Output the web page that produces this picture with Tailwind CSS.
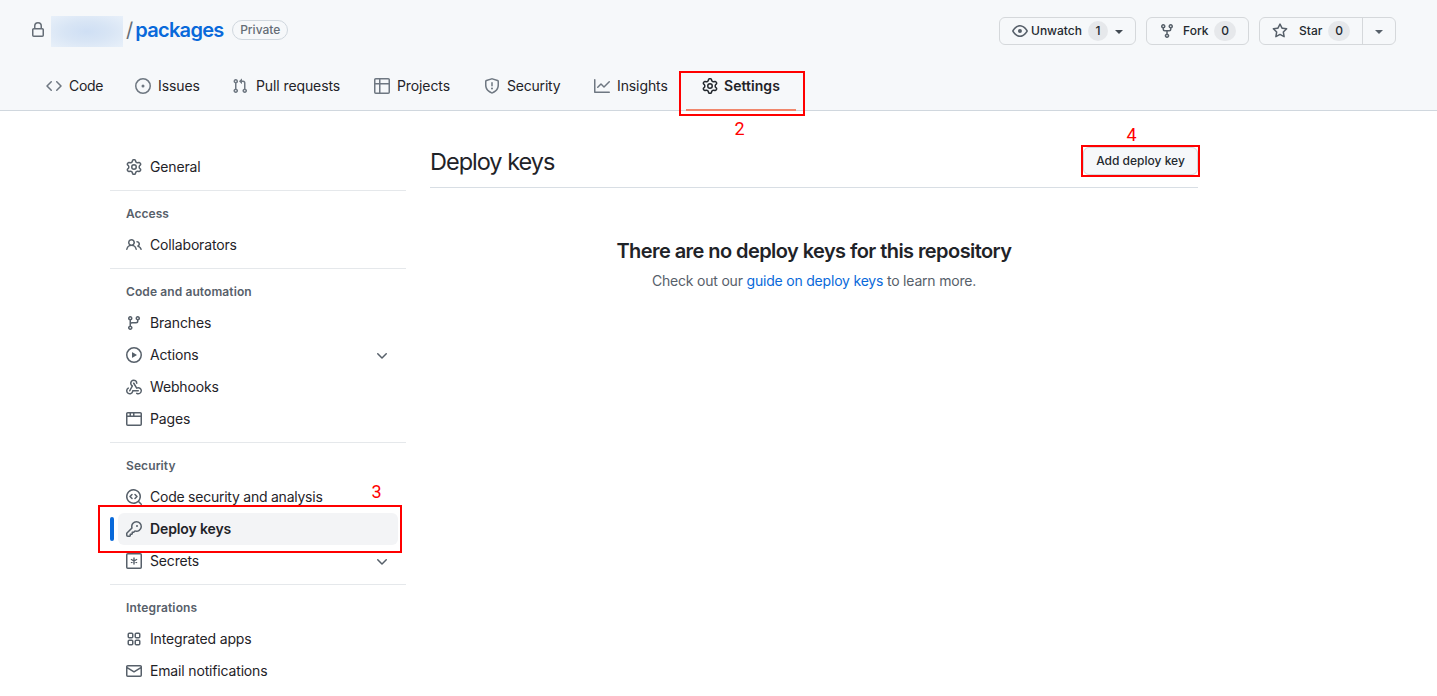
<!DOCTYPE html>
<html lang="en">
<head>
<meta charset="utf-8">
<title>Deploy keys</title>
<script src="https://cdn.jsdelivr.net/npm/@tailwindcss/browser@4"></script>
</head>
<body class="relative h-[696px] w-[1437px] overflow-hidden bg-white font-['Inter',sans-serif] text-sm text-[#1f2328]">
<svg class="hidden">
<symbol id="lock" viewBox="0 0 16 16"><path d="M4 4a4 4 0 0 1 8 0v2h.25c.966 0 1.75.784 1.75 1.75v5.5A1.75 1.75 0 0 1 12.25 15h-8.5A1.75 1.75 0 0 1 2 13.25v-5.5C2 6.784 2.784 6 3.75 6H4Zm8.25 3.5h-8.5a.25.25 0 0 0-.25.25v5.5c0 .138.112.25.25.25h8.5a.25.25 0 0 0 .25-.25v-5.5a.25.25 0 0 0-.25-.25ZM10.5 6V4a2.5 2.5 0 1 0-5 0v2Z"/></symbol>
<symbol id="code" viewBox="0 0 16 16"><path d="m11.28 3.22 4.25 4.25a.75.75 0 0 1 0 1.06l-4.25 4.25a.749.749 0 0 1-1.275-.326.749.749 0 0 1 .215-.734L13.94 8l-3.72-3.72a.749.749 0 0 1 .326-1.275.749.749 0 0 1 .734.215Zm-6.56 0a.751.751 0 0 1 1.042.018.751.751 0 0 1 .018 1.042L2.06 8l3.72 3.72a.749.749 0 0 1-.326 1.275.749.749 0 0 1-.734-.215L.47 8.53a.75.75 0 0 1 0-1.06Z"/></symbol>
<symbol id="issue" viewBox="0 0 16 16"><path d="M8 9.5a1.5 1.5 0 1 0 0-3 1.5 1.5 0 0 0 0 3Z"/><path d="M8 0a8 8 0 1 1 0 16A8 8 0 0 1 8 0ZM1.5 8a6.5 6.5 0 1 0 13 0 6.5 6.5 0 0 0-13 0Z"/></symbol>
<symbol id="pr" viewBox="0 0 16 16"><path d="M1.5 3.25a2.25 2.25 0 1 1 3 2.122v5.256a2.251 2.251 0 1 1-1.5 0V5.372A2.25 2.25 0 0 1 1.5 3.25Zm5.677-.177L9.573.677A.25.25 0 0 1 10 .854V2.5h1A2.5 2.5 0 0 1 13.5 5v5.628a2.251 2.251 0 1 1-1.5 0V5a1 1 0 0 0-1-1h-1v1.646a.25.25 0 0 1-.427.177L7.177 3.427a.25.25 0 0 1 0-.354ZM3.75 2.5a.75.75 0 1 0 0 1.5.75.75 0 0 0 0-1.5Zm0 9.5a.75.75 0 1 0 0 1.5.75.75 0 0 0 0-1.5Zm8.25.75a.75.75 0 1 0 1.5 0 .75.75 0 0 0-1.5 0Z"/></symbol>
<symbol id="table" viewBox="0 0 16 16"><path d="M0 1.75C0 .784.784 0 1.75 0h12.5C15.216 0 16 .784 16 1.75v12.5A1.75 1.75 0 0 1 14.25 16H1.75A1.75 1.75 0 0 1 0 14.25ZM6.5 6.5v8h7.75a.25.25 0 0 0 .25-.25V6.5Zm8-1.5V1.75a.25.25 0 0 0-.25-.25H6.5V5Zm-13 1.5v7.75c0 .138.112.25.25.25H5v-8ZM5 5V1.5H1.75a.25.25 0 0 0-.25.25V5Z"/></symbol>
<symbol id="shield" viewBox="0 0 16 16"><path d="M7.467.133a1.748 1.748 0 0 1 1.066 0l5.25 1.68A1.75 1.75 0 0 1 15 3.48V7c0 1.566-.32 3.182-1.303 4.682-.983 1.498-2.585 2.813-5.032 3.855a1.697 1.697 0 0 1-1.33 0c-2.447-1.042-4.049-2.357-5.032-3.855C1.32 10.182 1 8.566 1 7V3.48a1.755 1.755 0 0 1 1.217-1.667Zm.61 1.429a.25.25 0 0 0-.153 0l-5.25 1.68a.25.25 0 0 0-.174.238V7c0 1.358.275 2.666 1.057 3.86.784 1.194 2.121 2.34 4.366 3.297a.196.196 0 0 0 .154 0c2.245-.956 3.582-2.104 4.366-3.298C13.225 9.666 13.5 8.36 13.5 7V3.48a.251.251 0 0 0-.174-.237l-5.25-1.68ZM8.75 4.75v3a.75.75 0 0 1-1.5 0v-3a.75.75 0 0 1 1.5 0ZM9 10.5a1 1 0 1 1-2 0 1 1 0 0 1 2 0Z"/></symbol>
<symbol id="graph" viewBox="0 0 16 16"><path d="M1.5 1.75V13.5h13.75a.75.75 0 0 1 0 1.5H.75a.75.75 0 0 1-.75-.75V1.75a.75.75 0 0 1 1.5 0Zm14.28 2.53-5.25 5.25a.75.75 0 0 1-1.06 0L7 7.06 4.28 9.78a.751.751 0 0 1-1.042-.018.751.751 0 0 1-.018-1.042l3.25-3.25a.75.75 0 0 1 1.06 0L10 7.94l4.72-4.72a.751.751 0 0 1 1.042.018.751.751 0 0 1 .018 1.042Z"/></symbol>
<symbol id="gear" viewBox="0 0 16 16"><path d="M8 0a8.2 8.2 0 0 1 .701.031C9.444.095 9.99.645 10.16 1.29l.288 1.107c.018.066.079.158.212.224.231.114.454.243.668.386.123.082.233.09.299.071l1.103-.303c.644-.176 1.392.021 1.82.63.27.385.506.792.704 1.218.315.675.111 1.422-.364 1.891l-.814.806c-.049.048-.098.147-.088.294.016.257.016.515 0 .772-.01.147.038.246.088.294l.814.806c.475.469.679 1.216.364 1.891a7.977 7.977 0 0 1-.704 1.217c-.428.61-1.176.807-1.82.63l-1.102-.302c-.067-.019-.177-.011-.3.071a5.909 5.909 0 0 1-.668.386c-.133.066-.194.158-.211.224l-.29 1.106c-.168.646-.715 1.196-1.458 1.26a8.006 8.006 0 0 1-1.402 0c-.743-.064-1.289-.614-1.458-1.26l-.289-1.106c-.018-.066-.079-.158-.212-.224a5.738 5.738 0 0 1-.668-.386c-.123-.082-.233-.09-.299-.071l-1.103.303c-.644.176-1.392-.021-1.82-.63a8.12 8.12 0 0 1-.704-1.218c-.315-.675-.111-1.422.363-1.891l.815-.806c.05-.048.098-.147.088-.294a6.214 6.214 0 0 1 0-.772c.01-.147-.038-.246-.088-.294l-.815-.806C.635 6.045.431 5.298.746 4.623a7.92 7.92 0 0 1 .704-1.217c.428-.61 1.176-.807 1.82-.63l1.102.302c.067.019.177.011.3-.071.214-.143.437-.272.668-.386.133-.066.194-.158.211-.224l.29-1.106C6.009.645 6.556.095 7.299.03 7.53.01 7.764 0 8 0Zm-.571 1.525c-.036.003-.108.036-.137.146l-.289 1.105c-.147.561-.549.967-.998 1.189-.173.086-.34.183-.5.29-.417.278-.97.423-1.529.27l-1.103-.303c-.109-.03-.175.016-.195.045-.22.312-.412.644-.573.99-.014.031-.021.11.059.19l.815.806c.411.406.562.957.53 1.456a4.709 4.709 0 0 0 0 .582c.032.499-.119 1.05-.53 1.456l-.815.806c-.081.08-.073.159-.059.19.162.346.353.677.573.989.02.03.085.076.195.046l1.102-.303c.56-.153 1.113-.008 1.53.27.161.107.328.204.501.29.447.222.85.629.997 1.189l.289 1.105c.029.109.101.143.137.146a6.6 6.6 0 0 0 1.142 0c.036-.003.108-.036.137-.146l.289-1.105c.147-.561.549-.967.998-1.189.173-.086.34-.183.5-.29.417-.278.97-.423 1.529-.27l1.103.303c.109.029.175-.016.195-.045.22-.313.411-.644.573-.99.014-.031.021-.11-.059-.19l-.815-.806c-.411-.406-.562-.957-.53-1.456a4.709 4.709 0 0 0 0-.582c-.032-.499.119-1.05.53-1.456l.815-.806c.081-.08.073-.159.059-.19a6.464 6.464 0 0 0-.573-.989c-.02-.03-.085-.076-.195-.046l-1.102.303c-.56.153-1.113.008-1.53-.27a4.44 4.44 0 0 0-.501-.29c-.447-.222-.85-.629-.997-1.189l-.289-1.105c-.029-.11-.101-.143-.137-.146a6.6 6.6 0 0 0-1.142 0ZM11 8a3 3 0 1 1-6 0 3 3 0 0 1 6 0ZM9.5 8a1.5 1.5 0 1 0-3.001.001A1.5 1.5 0 0 0 9.5 8Z"/></symbol>
<symbol id="people" viewBox="0 0 16 16"><path d="M2 5.5a3.5 3.5 0 1 1 5.898 2.549 5.508 5.508 0 0 1 3.034 4.084.75.75 0 1 1-1.482.235 4 4 0 0 0-7.9 0 .75.75 0 0 1-1.482-.236A5.507 5.507 0 0 1 3.102 8.05 3.493 3.493 0 0 1 2 5.5ZM11 4a3.001 3.001 0 0 1 2.22 5.018 5.01 5.01 0 0 1 2.56 3.012.749.749 0 0 1-.885.954.752.752 0 0 1-.549-.514 3.507 3.507 0 0 0-2.522-2.372.75.75 0 0 1-.574-.73v-.352a.75.75 0 0 1 .416-.672A1.5 1.5 0 0 0 11 5.5.75.75 0 0 1 11 4Zm-5.5-.5a2 2 0 1 0-.001 3.999A2 2 0 0 0 5.5 3.5Z"/></symbol>
<symbol id="branch" viewBox="0 0 16 16"><path d="M9.5 3.25a2.25 2.25 0 1 1 3 2.122V6A2.5 2.5 0 0 1 10 8.5H6a1 1 0 0 0-1 1v1.128a2.251 2.251 0 1 1-1.5 0V5.372a2.25 2.25 0 1 1 1.5 0v1.836A2.493 2.493 0 0 1 6 7h4a1 1 0 0 0 1-1v-.628A2.25 2.25 0 0 1 9.5 3.25Zm-6 0a.75.75 0 1 0 1.5 0 .75.75 0 0 0-1.5 0Zm8.25-.75a.75.75 0 1 0 0 1.5.75.75 0 0 0 0-1.5ZM4.25 12a.75.75 0 1 0 0 1.5.75.75 0 0 0 0-1.5Z"/></symbol>
<symbol id="play" viewBox="0 0 16 16"><path d="M8 0a8 8 0 1 1 0 16A8 8 0 0 1 8 0ZM1.5 8a6.5 6.5 0 1 0 13 0 6.5 6.5 0 0 0-13 0Zm4.879-2.773 4.264 2.559a.25.25 0 0 1 0 .428l-4.264 2.559A.25.25 0 0 1 6 10.559V5.442a.25.25 0 0 1 .379-.215Z"/></symbol>
<symbol id="webhook" viewBox="0 0 16 16"><path d="M5.5 4.25a2.25 2.25 0 0 1 4.5 0 .75.75 0 0 0 1.5 0 3.75 3.75 0 1 0-6.14 2.889l-2.272 4.258a.75.75 0 0 0 1.324.706L7 7.25a.75.75 0 0 0-.309-1.015A2.25 2.25 0 0 1 5.5 4.25Z"/><path d="M7.364 3.607a.75.75 0 0 1 1.03.257l2.608 4.349a3.75 3.75 0 1 1-.628 6.785.75.75 0 0 1 .752-1.299 2.25 2.25 0 1 0-.033-3.88.75.75 0 0 1-1.03-.256L7.107 4.636a.75.75 0 0 1 .257-1.03Z"/><path d="M2.9 8.776A.75.75 0 0 1 2.625 9.8 2.25 2.25 0 1 0 6 11.75a.75.75 0 0 1 .75-.751h5.5a.75.75 0 0 1 0 1.5H7.425a3.751 3.751 0 1 1-5.55-3.998.75.75 0 0 1 1.024.274Z"/></symbol>
<symbol id="browser" viewBox="0 0 16 16"><path d="M0 2.75C0 1.784.784 1 1.75 1h12.5c.966 0 1.75.784 1.75 1.75v10.5A1.75 1.75 0 0 1 14.25 15H1.75A1.75 1.75 0 0 1 0 13.25ZM14.5 6h-13v7.25c0 .138.112.25.25.25h12.5a.25.25 0 0 0 .25-.25Zm-6-3.5v2h6V2.75a.25.25 0 0 0-.25-.25ZM5 2.5v2h2v-2Zm-3.25 0a.25.25 0 0 0-.25.25V4.5h2v-2Z"/></symbol>
<symbol id="codescan" viewBox="0 0 16 16"><path d="M8.47 4.97a.75.75 0 0 0 0 1.06L9.94 7.5 8.47 8.97a.75.75 0 1 0 1.06 1.06l2-2a.75.75 0 0 0 0-1.06l-2-2a.75.75 0 0 0-1.06 0ZM6.53 6.03a.75.75 0 0 0-1.06-1.06l-2 2a.75.75 0 0 0 0 1.06l2 2a.75.75 0 1 0 1.06-1.06L5.06 7.5l1.47-1.47Z"/><path d="M12.246 13.307a7.5 7.5 0 1 1 1.06-1.06l2.474 2.473a.75.75 0 1 1-1.06 1.06l-2.474-2.473ZM1.5 7.5a6 6 0 1 0 12 0 6 6 0 0 0-12 0Z"/></symbol>
<symbol id="key" viewBox="0 0 16 16"><path d="M10.5 0a5.499 5.499 0 1 1-1.288 10.848l-.932.932a.749.749 0 0 1-.53.22H7v.75a.749.749 0 0 1-.22.53l-.5.5a.749.749 0 0 1-.53.22H5v.75a.749.749 0 0 1-.22.53l-.5.5a.749.749 0 0 1-.53.22h-2A1.75 1.75 0 0 1 0 14.25v-2c0-.199.079-.389.22-.53l4.932-4.932A5.5 5.5 0 0 1 10.5 0Zm-4 5.5c-.001.431.069.86.205 1.269a.75.75 0 0 1-.181.768L1.5 12.56v1.69c0 .138.112.25.25.25h1.69l.06-.06v-1.19a.75.75 0 0 1 .75-.75h1.19l.06-.06v-1.19a.75.75 0 0 1 .75-.75h1.19l1.023-1.025a.75.75 0 0 1 .768-.18A4 4 0 1 0 6.5 5.5ZM11 6a1 1 0 1 1 0-2 1 1 0 0 1 0 2Z"/></symbol>
<symbol id="asterisk" viewBox="0 0 16 16"><g fill="none" stroke="currentColor" stroke-width="1.5" stroke-linecap="round"><rect x=".75" y=".75" width="14.5" height="14.5" rx="1"/><path d="M8 5v6M5.4 6.5l5.2 3M10.6 6.5l-5.2 3" stroke-width="1.4"/></g></symbol>
<symbol id="apps" viewBox="0 0 16 16"><g fill="none" stroke="currentColor" stroke-width="1.5"><rect x="2.25" y="2.25" width="4.5" height="4.5" rx="1"/><rect x="9.25" y="2.25" width="4.5" height="4.5" rx="1"/><rect x="2.25" y="9.25" width="4.5" height="4.5" rx="1"/><rect x="9.25" y="9.25" width="4.5" height="4.5" rx="1"/></g></symbol>
<symbol id="mail" viewBox="0 0 16 16"><path d="M1.75 2h12.5c.966 0 1.75.784 1.75 1.75v8.5A1.75 1.75 0 0 1 14.25 14H1.75A1.75 1.75 0 0 1 0 12.25v-8.5C0 2.784.784 2 1.75 2ZM1.5 12.251c0 .138.112.25.25.25h12.5a.25.25 0 0 0 .25-.25V5.809L8.38 9.397a.75.75 0 0 1-.76 0L1.5 5.809v6.442Zm13-8.181v-.32a.25.25 0 0 0-.25-.25H1.75a.25.25 0 0 0-.25.25v.32L8 7.88Z"/></symbol>
<symbol id="chevron" viewBox="0 0 16 16"><path d="M12.78 5.22a.749.749 0 0 1 0 1.06l-4.25 4.25a.749.749 0 0 1-1.06 0L3.22 6.28a.749.749 0 1 1 1.06-1.06L8 8.939l3.72-3.719a.749.749 0 0 1 1.06 0Z"/></symbol>
<symbol id="eye" viewBox="0 0 16 16"><path d="M8 2c1.981 0 3.671.992 4.933 2.078 1.27 1.091 2.187 2.345 2.637 3.023a1.62 1.62 0 0 1 0 1.798c-.45.678-1.367 1.932-2.637 3.023C11.67 13.008 9.981 14 8 14c-1.981 0-3.671-.992-4.933-2.078C1.797 10.83.88 9.576.43 8.898a1.62 1.62 0 0 1 0-1.798c.45-.677 1.367-1.931 2.637-3.022C4.33 2.992 6.019 2 8 2ZM1.679 7.932a.12.12 0 0 0 0 .136c.411.622 1.241 1.75 2.366 2.717C5.176 11.758 6.527 12.5 8 12.5c1.473 0 2.825-.742 3.955-1.715 1.124-.967 1.954-2.096 2.366-2.717a.12.12 0 0 0 0-.136c-.412-.621-1.242-1.75-2.366-2.717C10.824 4.242 9.473 3.5 8 3.5c-1.473 0-2.825.742-3.955 1.715-1.124.967-1.954 2.096-2.366 2.717ZM8 10a2 2 0 1 1-.001-3.999A2 2 0 0 1 8 10Z"/></symbol>
<symbol id="fork" viewBox="0 0 16 16"><path d="M5 5.372v.878c0 .414.336.75.75.75h4.5a.75.75 0 0 0 .75-.75v-.878a2.25 2.25 0 1 1 1.5 0v.878a2.25 2.25 0 0 1-2.25 2.25h-1.5v2.128a2.251 2.251 0 1 1-1.5 0V8.5h-1.5A2.25 2.25 0 0 1 3.5 6.25v-.878a2.25 2.25 0 1 1 1.5 0ZM5 3.25a.75.75 0 1 0-1.5 0 .75.75 0 0 0 1.5 0Zm6.75.75a.75.75 0 1 0 0-1.5.75.75 0 0 0 0 1.5Zm-3 8.75a.75.75 0 1 0-1.5 0 .75.75 0 0 0 1.5 0Z"/></symbol>
<symbol id="star" viewBox="0 0 16 16"><path d="M8 .25a.75.75 0 0 1 .673.418l1.882 3.815 4.21.612a.75.75 0 0 1 .416 1.279l-3.046 2.97.719 4.192a.751.751 0 0 1-1.088.791L8 12.347l-3.766 1.98a.75.75 0 0 1-1.088-.79l.72-4.194L.818 6.374a.75.75 0 0 1 .416-1.28l4.21-.611L7.327.668A.75.75 0 0 1 8 .25Zm0 2.445L6.615 5.5a.75.75 0 0 1-.564.41l-3.097.45 2.24 2.184a.75.75 0 0 1 .216.664l-.528 3.084 2.769-1.456a.75.75 0 0 1 .698 0l2.77 1.456-.53-3.084a.75.75 0 0 1 .216-.664l2.24-2.183-3.096-.45a.75.75 0 0 1-.564-.41L8 2.694Z"/></symbol>
<symbol id="caret" viewBox="0 0 8 4"><path d="M0 0h8L4 4Z"/></symbol>
</svg>

<header class="h-[111px] border-b border-[#d0d7de] bg-[#f6f8fa]">
  <div class="flex h-[62px] items-center justify-between pr-[41px] pl-[30px]">
    <div class="flex items-center">
      <svg class="mb-[2px] size-4 fill-[#656d76]"><use href="#lock"/></svg>
      <span class="ml-[5px] h-[31px] w-[72px] bg-[radial-gradient(ellipse_at_center,#cfdff4_0%,#d8e5f5_45%,#e8f0f9_100%)]"></span>
      <span class="mb-[2px] ml-[3px] text-xl text-[#656d76]">/</span>
      <a class="mb-[2px] ml-[2px] w-[89px] text-xl font-semibold tracking-[-0.7px] text-[#0969da]">packages</a>
      <span class="mb-[2px] ml-2 flex h-5 w-14 items-center justify-center rounded-full border border-[#d0d7de] text-xs font-medium text-[#656d76]">Private</span>
    </div>
    <div class="flex gap-[10px] text-xs font-medium text-[#24292f]">
      <div class="flex h-7 w-[137px] items-center rounded-md border border-[#d5d8db] pl-3">
        <svg class="size-4 fill-[#57606a]"><use href="#eye"/></svg>
        <span class="ml-[3px] w-[54px]">Unwatch</span>
        <span class="ml-[3px] flex size-5 items-center justify-center rounded-full bg-[#e6e8eb]">1</span>
        <svg class="mt-px ml-[7px] h-1 w-2 fill-[#424a53]"><use href="#caret"/></svg>
      </div>
      <div class="flex h-7 w-[103px] items-center rounded-md border border-[#d5d8db] pl-3">
        <svg class="size-4 fill-[#57606a]"><use href="#fork"/></svg>
        <span class="ml-2 w-[27px]">Fork</span>
        <span class="ml-[4px] flex h-5 w-[22px] items-center justify-center rounded-full bg-[#e6e8eb]">0</span>
      </div>
      <div class="flex h-7 w-[137px] items-center rounded-md border border-[#d5d8db] pl-3">
        <svg class="size-4 fill-[#57606a]"><use href="#star"/></svg>
        <span class="ml-[11px] w-[25px]">Star</span>
        <span class="ml-[4px] flex h-5 w-[22px] items-center justify-center rounded-full bg-[#e6e8eb]">0</span>
        <span class="ml-[12px] flex h-full flex-1 items-center justify-center border-l border-[#d5d8db]"><svg class="mt-px h-1 w-2 fill-[#57606a]"><use href="#caret"/></svg></span>
      </div>
    </div>
  </div>
  <nav class="flex h-[49px] pl-[30px] tracking-[-0.1px]">
    <a class="flex w-[89px] items-center gap-[7px] pb-[2px] pl-4 tracking-[-0.3px]"><svg class="size-4 fill-[#6e7781]"><use href="#code"/></svg>Code</a>
    <a class="flex w-[97px] items-center gap-[7px] pb-[2px] pl-4"><svg class="size-4 fill-[#6e7781]"><use href="#issue"/></svg>Issues</a>
    <a class="flex w-[142px] items-center gap-2 pb-[2px] pl-4"><svg class="size-4 fill-[#6e7781]"><use href="#pr"/></svg>Pull requests</a>
    <a class="flex w-[110px] items-center gap-[7px] pb-[2px] pl-4"><svg class="size-4 fill-[#6e7781]"><use href="#table"/></svg>Projects</a>
    <a class="flex w-[110px] items-center gap-[7px] pb-[2px] pl-4 tracking-[-0.2px]"><svg class="size-4 fill-[#6e7781]"><use href="#shield"/></svg>Security</a>
    <a class="flex w-[108px] items-center gap-[7px] pb-[2px] pl-4"><svg class="size-4 fill-[#6e7781]"><use href="#graph"/></svg>Insights</a>
    <a class="flex w-[110px] items-center gap-[6px] border-b-2 border-[#f1876c] pl-4 font-semibold tracking-[0.05px]"><svg class="size-4 fill-[#24292f]"><use href="#gear"/></svg>Settings</a>
  </nav>
</header>

<div class="flex gap-6 pl-[110px]">
  <aside class="w-[296px] pt-10 tracking-[-0.16px]">
    <a class="flex h-8 items-center gap-2 pl-4"><svg class="size-4 fill-[#57606a]"><use href="#gear"/></svg>General</a>
    <hr class="mt-[7px] border-[#e5e8eb]">
    <h3 class="mt-2 flex h-[30px] items-center pl-4 text-xs font-semibold tracking-normal text-[#57606a]">Access</h3>
    <a class="flex h-8 items-center gap-2 pl-4"><svg class="size-4 fill-[#57606a]"><use href="#people"/></svg>Collaborators</a>
    <hr class="mt-[7px] border-[#e5e8eb]">
    <h3 class="mt-2 flex h-[30px] items-center pl-4 text-xs font-semibold tracking-[0.1px] text-[#57606a]">Code and automation</h3>
    <a class="flex h-8 items-center gap-2 pl-4"><svg class="size-4 fill-[#57606a]"><use href="#branch"/></svg>Branches</a>
    <a class="flex h-8 items-center gap-2 pr-4 pl-4"><svg class="size-4 fill-[#57606a]"><use href="#play"/></svg>Actions<svg class="mt-px ml-auto size-4 fill-[#57606a]"><use href="#chevron"/></svg></a>
    <a class="flex h-8 items-center gap-2 pl-4"><svg class="size-4 fill-[#57606a]"><use href="#webhook"/></svg>Webhooks</a>
    <a class="flex h-8 items-center gap-2 pl-4"><svg class="size-4 fill-[#57606a]"><use href="#browser"/></svg>Pages</a>
    <hr class="mt-[7px] border-[#e5e8eb]">
    <h3 class="mt-2 flex h-[30px] items-center pl-4 text-xs font-semibold tracking-[0.1px] text-[#57606a]">Security</h3>
    <a class="flex h-8 items-center gap-2 pl-4 tracking-[-0.24px]"><svg class="size-4 fill-[#57606a]"><use href="#codescan"/></svg>Code security and analysis</a>
    <div class="flex h-8 items-center gap-1 pr-2">
      <span class="h-6 w-1 rounded-md bg-[#0969da]"></span>
      <a class="flex h-8 flex-1 items-center gap-2 rounded-md bg-[#f3f4f6] pl-2 font-semibold tracking-[-0.12px]"><svg class="size-4 fill-[#57606a]"><use href="#key"/></svg>Deploy keys</a>
    </div>
    <a class="flex h-8 items-center gap-2 pr-4 pl-4"><svg class="size-4 text-[#57606a]"><use href="#asterisk"/></svg>Secrets<svg class="mt-px ml-auto size-4 fill-[#57606a]"><use href="#chevron"/></svg></a>
    <hr class="mt-[7px] border-[#e5e8eb]">
    <h3 class="mt-2 flex h-[30px] items-center pl-4 text-xs font-semibold tracking-[0.15px] text-[#57606a]">Integrations</h3>
    <a class="flex h-8 items-center gap-2 pl-4"><svg class="size-4 text-[#57606a]"><use href="#apps"/></svg>Integrated apps</a>
    <a class="flex h-8 items-center gap-2 pl-4"><svg class="size-4 fill-[#57606a]"><use href="#mail"/></svg>Email notifications</a>
  </aside>
  <main class="w-[768px] pt-[34px]">
    <div class="flex h-[43px] items-start justify-between border-b border-[#d8dee4]">
      <h2 class="text-[23.5px] leading-[34px] tracking-[-1px]">Deploy keys</h2>
      <button class="mt-[2px] flex h-7 w-[115px] items-center justify-center rounded-md border border-[#d5d8db] bg-[#f6f8fa] text-xs font-medium text-[#24292f]">Add deploy key</button>
    </div>
    <div class="pt-[48px] text-center">
      <h3 class="text-xl leading-[30px] font-semibold tracking-[-0.57px]">There are no deploy keys for this repository</h3>
      <p class="mt-[4px] leading-[21px] tracking-[-0.2px] text-[#57606a]">Check out our <a class="text-[#0969da]">guide on deploy keys</a> to learn more.</p>
    </div>
  </main>
</div>

<!-- Numbered callouts -->
<div class="absolute top-[71px] left-[679px] h-[45px] w-[126px] border-2 border-[#ff0000]"></div>
<span class="absolute top-[119px] left-[734.5px] font-['Roboto',sans-serif] text-lg leading-5 text-[#ff0000]">2</span>
<div class="absolute top-[505px] left-[98px] h-[48px] w-[304px] border-2 border-[#ff0000]"></div>
<span class="absolute top-[482px] left-[371.5px] font-['Roboto',sans-serif] text-lg leading-5 text-[#ff0000]">3</span>
<div class="absolute top-[145px] left-[1081px] h-[32px] w-[119px] border-2 border-[#ff0000]"></div>
<span class="absolute top-[125px] left-[1126.5px] font-['Roboto',sans-serif] text-lg leading-5 text-[#ff0000]">4</span>
</body>
</html>
